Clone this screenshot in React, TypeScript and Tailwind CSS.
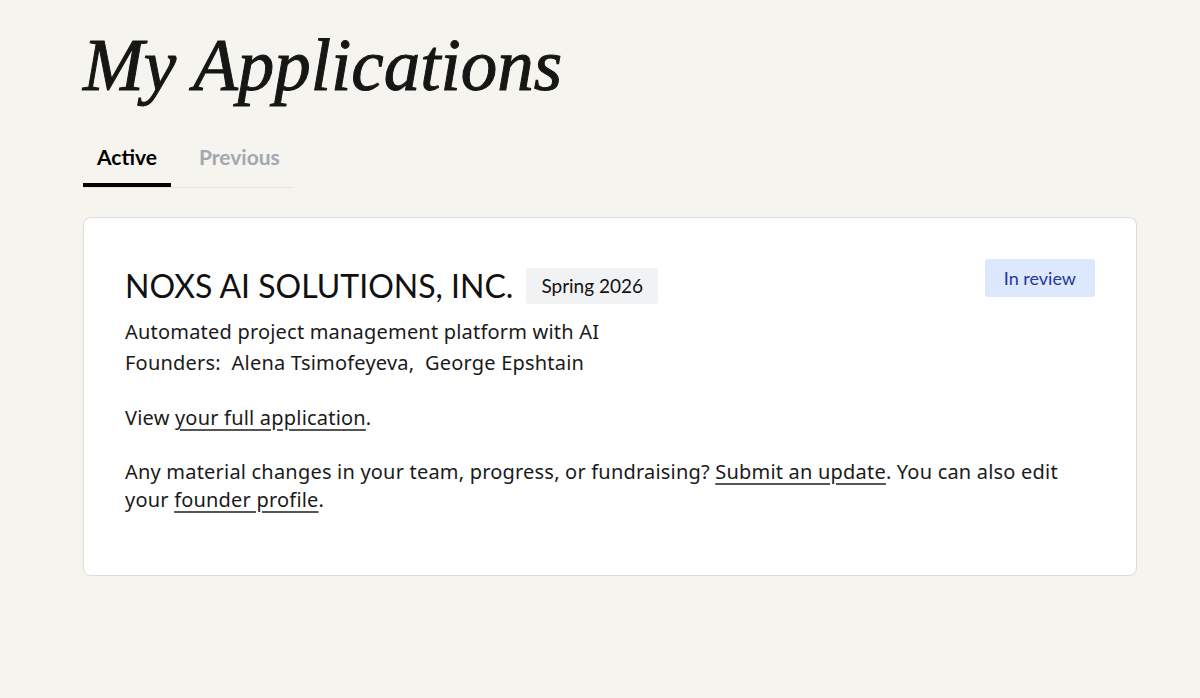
import React from "react";

const sans = { fontFamily: "Lato, 'Noto Sans', sans-serif" };
const body = { fontFamily: "'Noto Sans', Lato, sans-serif" };

export default function App() {
  return (
    <div className="min-h-[698px] w-full bg-[#f5f4ef] text-[#1a1a1a]" style={sans}>
      <div className="pl-[83px] pr-[63px] pt-[22px]">
        <h1
          className="text-[73px] font-normal leading-[88px] italic text-[#161614] [-webkit-text-stroke:1px_#161614]"
          style={{ fontFamily: "'Liberation Serif', 'DejaVu Serif', serif" }}
        >
          My Applications
        </h1>
        <div className="mt-[31px] flex w-[210px] border-b border-[#e4e3de]">
          <div className="-mb-px flex h-[46px] items-start border-b-[4px] border-black px-[14px] text-[21px] font-bold text-black">
            Active
          </div>
          <div className="flex h-[46px] items-start px-[28px] text-[21px] font-bold text-[#a3a7b0]">
            Previous
          </div>
        </div>
        <div className="mt-[29px] rounded-[8px] border border-[#dedcd6] bg-white px-[41px] pb-[61px] pt-[41px]">
          <div className="flex items-start justify-between">
            <div className="flex items-center gap-[13px] pt-[7px]">
              <div className="text-[32px] font-normal leading-[40px] text-[#111]">NOXS AI SOLUTIONS, INC.</div>
              <span className="rounded-[3px] bg-[#f1f2f4] px-[15px] py-[6px] text-[19px] leading-[24px] text-[#111]">
                Spring 2026
              </span>
            </div>
            <span className="rounded-[3px] bg-[#dce8fb] px-[19px] py-[7px] text-[18px] leading-[24px] text-[#2436a0]">
              In review
            </span>
          </div>
          <div style={body} className="tracking-[0.2px]">
            <div className="mt-[10px] text-[20px] leading-[31px] text-[#1a1a1a]">
              <p>Automated project management platform with AI</p>
              <p>Founders:&nbsp; Alena Tsimofeyeva,&nbsp; George Epshtain</p>
            </div>
            <p className="mt-[26px] text-[20px] leading-[28px]">
              View <a className="underline decoration-[#555] underline-offset-[4px]">your full application</a>.
            </p>
            <p className="mt-[26px] text-[20px] leading-[28px]">
              Any material changes in your team, progress, or fundraising?{" "}
              <a className="underline decoration-[#555] underline-offset-[4px]">Submit an update</a>. You can also edit
              <br />
              your <a className="underline decoration-[#555] underline-offset-[4px]">founder profile</a>.
            </p>
          </div>
        </div>
      </div>
    </div>
  );
}
